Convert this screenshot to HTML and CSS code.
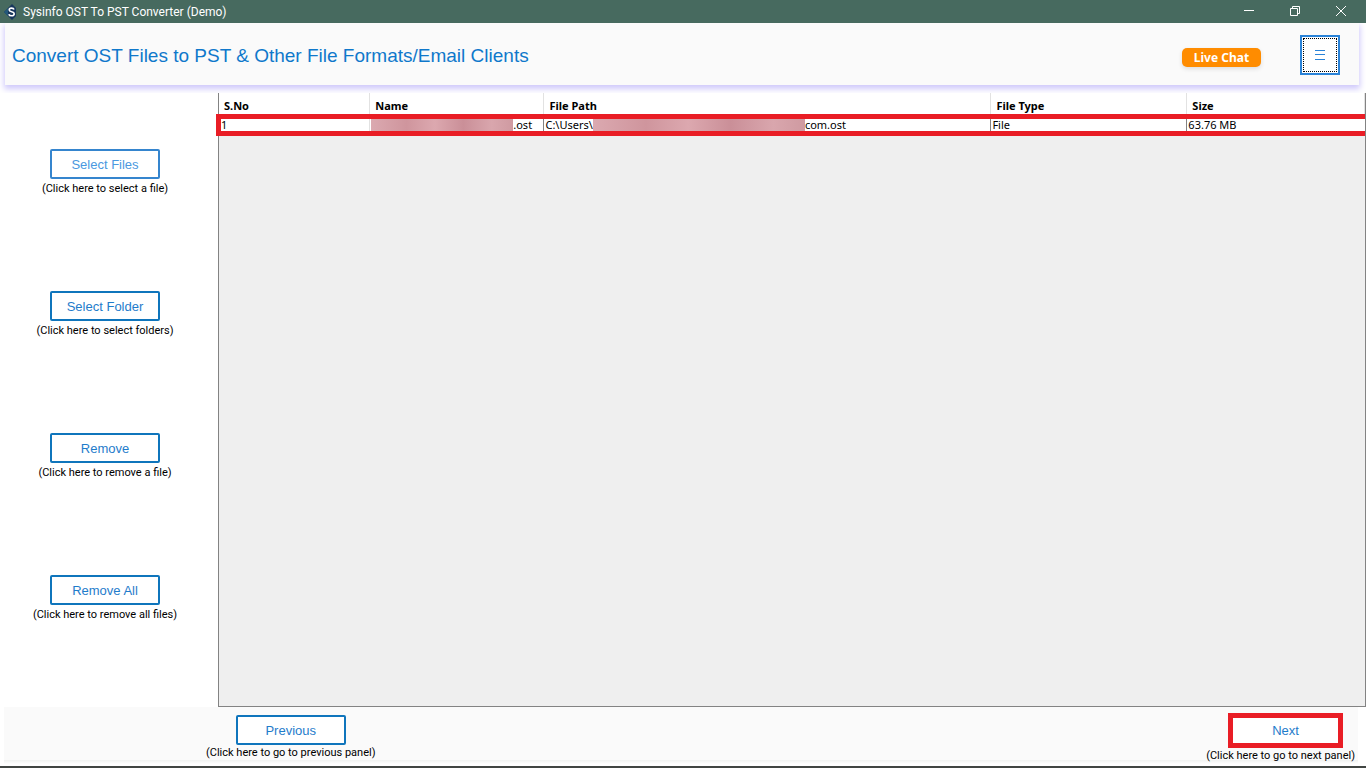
FILE: index.html
```html
<!DOCTYPE html>
<html lang="en">
  <head>
    <meta charset="utf-8" />
    <title>Sysinfo OST To PST Converter (Demo)</title>
    <link rel="stylesheet" href="styles.css">
  </head>
  <body>
    <div class="titlebar">
      <svg class="app-icon" width="14" height="18" viewBox="0 0 14 18">
        <path d="M8 1 L12 5 V13 L8 17 L0 9 Z" fill="#17365c" />
        <path d="M0 9 L4 5 V13 Z" fill="#24587a" />
        <path d="M10 6.5 C9.5 4.8 5.2 4.4 5.2 7 C5.2 9.4 10.2 8.2 10.2 10.8 C10.2 13.6 5.3 13.2 4.8 11.2" fill="none" stroke="#fff" stroke-width="1.6" />
      </svg>
      <span class="titlebar-text">Sysinfo OST To PST Converter (Demo)</span>
      <div class="window-controls">
        <button type="button" aria-label="Minimize">
          <svg width="12" height="12" viewBox="0 0 12 12"><path d="M1 5.5h10" /></svg>
        </button>
        <button type="button" aria-label="Restore">
          <svg width="12" height="12" viewBox="0 0 12 12"><path d="M1.5 3.5h7v7h-7zM3.5 3.5v-2h7v7h-2" /></svg>
        </button>
        <button type="button" aria-label="Close">
          <svg width="12" height="12" viewBox="0 0 12 12"><path d="M1 1l10 10M11 1L1 11" /></svg>
        </button>
      </div>
    </div>

    <header class="header">
      <h1>Convert OST Files to PST &amp; Other File Formats/Email Clients</h1>
      <button type="button" class="live-chat">Live Chat</button>
      <button type="button" class="menu-btn" aria-label="Menu">
        <svg width="10" height="10" viewBox="0 0 10 10"><path d="M0 .5h10M0 4.5h10M0 9.5h10" /></svg>
      </button>
    </header>

    <main class="main">
      <div class="sidebar">
        <div class="action">
          <button type="button" class="btn btn-hover">Select Files</button>
          <p>(Click here to select a file)</p>
        </div>
        <div class="action">
          <button type="button" class="btn">Select Folder</button>
          <p>(Click here to select folders)</p>
        </div>
        <div class="action">
          <button type="button" class="btn">Remove</button>
          <p>(Click here to remove a file)</p>
        </div>
        <div class="action">
          <button type="button" class="btn">Remove All</button>
          <p>(Click here to remove all files)</p>
        </div>
      </div>

      <div class="file-panel">
        <table class="file-table">
          <colgroup>
            <col class="col-no">
            <col class="col-name">
            <col class="col-path">
            <col class="col-type">
            <col>
          </colgroup>
          <thead>
            <tr>
              <th>S.No</th>
              <th>Name</th>
              <th>File Path</th>
              <th>File Type</th>
              <th>Size</th>
            </tr>
          </thead>
          <tbody>
            <tr class="highlighted">
              <td><span class="cell">1</span></td>
              <td><span class="cell"><span class="redacted redacted-name"></span>.ost</span></td>
              <td><span class="cell">C:\Users\<span class="redacted redacted-path"></span>com.ost</span></td>
              <td><span class="cell">File</span></td>
              <td><span class="cell">63.76 MB</span></td>
            </tr>
          </tbody>
        </table>
      </div>
    </main>

    <footer class="footer">
      <div class="action">
        <button type="button" class="btn">Previous</button>
        <p>(Click here to go to previous panel)</p>
      </div>
      <div class="action">
        <button type="button" class="btn btn-next">Next</button>
        <p>(Click here to go to next panel)</p>
      </div>
    </footer>
  </body>
</html>
```

FILE: styles.css
```css
* {
  margin: 0;
  padding: 0;
  box-sizing: border-box;
}

body {
  display: flex;
  flex-direction: column;
  min-height: 100vh;
  background: #fff;
  border-bottom: 2px solid #414643;
  font-family: "Noto Sans", Tahoma, sans-serif;
  font-size: 11px;
  color: #000;
  overflow: hidden;
}

button {
  font: inherit;
  cursor: pointer;
}

/* Window title bar */
.titlebar {
  display: flex;
  align-items: center;
  height: 23px;
  padding: 0 2px 0 4px;
  background: #476a5f;
  color: #fff;
}

.app-icon {
  margin-right: 5px;
}

.titlebar-text {
  font-family: Roboto, "Segoe UI", sans-serif;
  font-size: 12px;
}

.window-controls {
  display: flex;
  margin-left: auto;
  margin-top: -2px;
}

.window-controls button {
  display: flex;
  align-items: center;
  justify-content: center;
  width: 46px;
  height: 22px;
  background: none;
  border: none;
}

.window-controls svg {
  fill: none;
  stroke: #fff;
}

/* Header */
.header {
  display: flex;
  align-items: center;
  height: 62px;
  margin: 0 7px 8px 5px;
  padding: 2px 19px 0 7px;
  background: #fafafa;
  box-shadow: 0 3px 6px 1px #cfc9fb;
  clip-path: inset(0 -7px -8px -5px);
}

.header h1 {
  flex: 1;
  padding-top: 2px;
  font-family: "Liberation Sans", Arial, sans-serif;
  font-size: 19px;
  font-weight: 400;
  color: #0f78cb;
}

.live-chat {
  width: 79px;
  height: 19px;
  margin-top: 4px;
  background: #ff8c00;
  border: none;
  border-radius: 5px;
  box-shadow: 0 2px 4px #ddd;
  color: #fff;
  font-size: 12px;
  font-weight: 700;
  line-height: 19px;
}

.menu-btn {
  display: flex;
  align-items: center;
  justify-content: center;
  width: 40px;
  height: 40px;
  margin-left: 39px;
  background: #fff;
  border: 2px solid #2a83d8;
  outline: 1px dotted #000;
  outline-offset: -4px;
}

.menu-btn svg {
  fill: none;
  stroke: #2a83d8;
}

/* Buttons with a caption below */
.action {
  display: flex;
  flex-direction: column;
  align-items: center;
}

.action p {
  font-family: Roboto, Tahoma, sans-serif;
  line-height: 16px;
  white-space: nowrap;
}

.btn {
  width: 110px;
  height: 30px;
  background: #fff;
  border: 2px solid #0f75bc;
  border-radius: 2px;
  color: #1f7ccb;
  font-family: "Liberation Sans", Arial, sans-serif;
  font-size: 13px;
}

.btn-hover {
  border-color: #3585ce;
  color: #4a98e0;
}

/* Main area */
.main {
  display: flex;
  flex: 1;
}

.sidebar {
  display: grid;
  grid-template-rows: repeat(4, 1fr);
  align-items: center;
  width: 218px;
  padding: 10px 8px 36px 0;
}

.sidebar p {
  line-height: 20px;
}

.file-panel {
  flex: 1;
  background: #efefef;
  border: 1px solid #838383;
  border-top: none;
}

.file-table {
  width: 100%;
  table-layout: fixed;
  border-collapse: separate;
  border-spacing: 0;
  background: #fff;
}

.col-no {
  width: 13.2%;
}

.col-name {
  width: 15.2%;
}

.col-path {
  width: 39%;
}

.col-type {
  width: 17.1%;
}

.file-table th {
  height: 21px;
  padding: 4px 5px 0;
  border-right: 1px solid #e2e2e2;
  font-weight: 700;
  line-height: 16px;
  text-align: left;
}

.file-table td {
  white-space: nowrap;
}

.cell {
  display: block;
  height: 12px;
  padding-left: 1px;
  border-right: 1px solid #838383;
  line-height: 12px;
}

.file-table td:first-child .cell {
  padding-left: 0;
  border-right-color: #e2e2e2;
}

.file-table td:last-child .cell {
  border-right: none;
}

/* Row marked in red, the frame runs off the right edge */
.highlighted td {
  border-top: 5px solid #e91d25;
  border-bottom: 5px solid #e91d25;
}

.highlighted td:first-child {
  border-left: 2px solid #e91d25;
  box-shadow: -3px 0 #e91d25;
}

.redacted {
  display: inline-block;
  height: 12px;
  background: linear-gradient(90deg, #dba9b0, #cf959d 25%, #dca8af 45%, #ca8f98 65%, #d9a6ad 85%, #cf9aa1);
  vertical-align: top;
}

.redacted-name {
  width: 142px;
}

.redacted-path {
  width: 212px;
}

/* Footer */
.footer {
  display: flex;
  justify-content: space-between;
  height: 59px;
  padding: 6px 3px 0 202px;
  background: linear-gradient(#fafafa 53px, #f0f2f1 53px, #fff 57px);
  border-right: 8px solid #fff;
  border-left: 4px solid #fff;
}

.footer .btn {
  margin-top: 2px;
}

.footer .btn-next {
  width: 115px;
  height: 35px;
  margin-top: 0;
  margin-left: 10px;
  border: 5px solid #e91d25;
  border-radius: 0;
}
```
